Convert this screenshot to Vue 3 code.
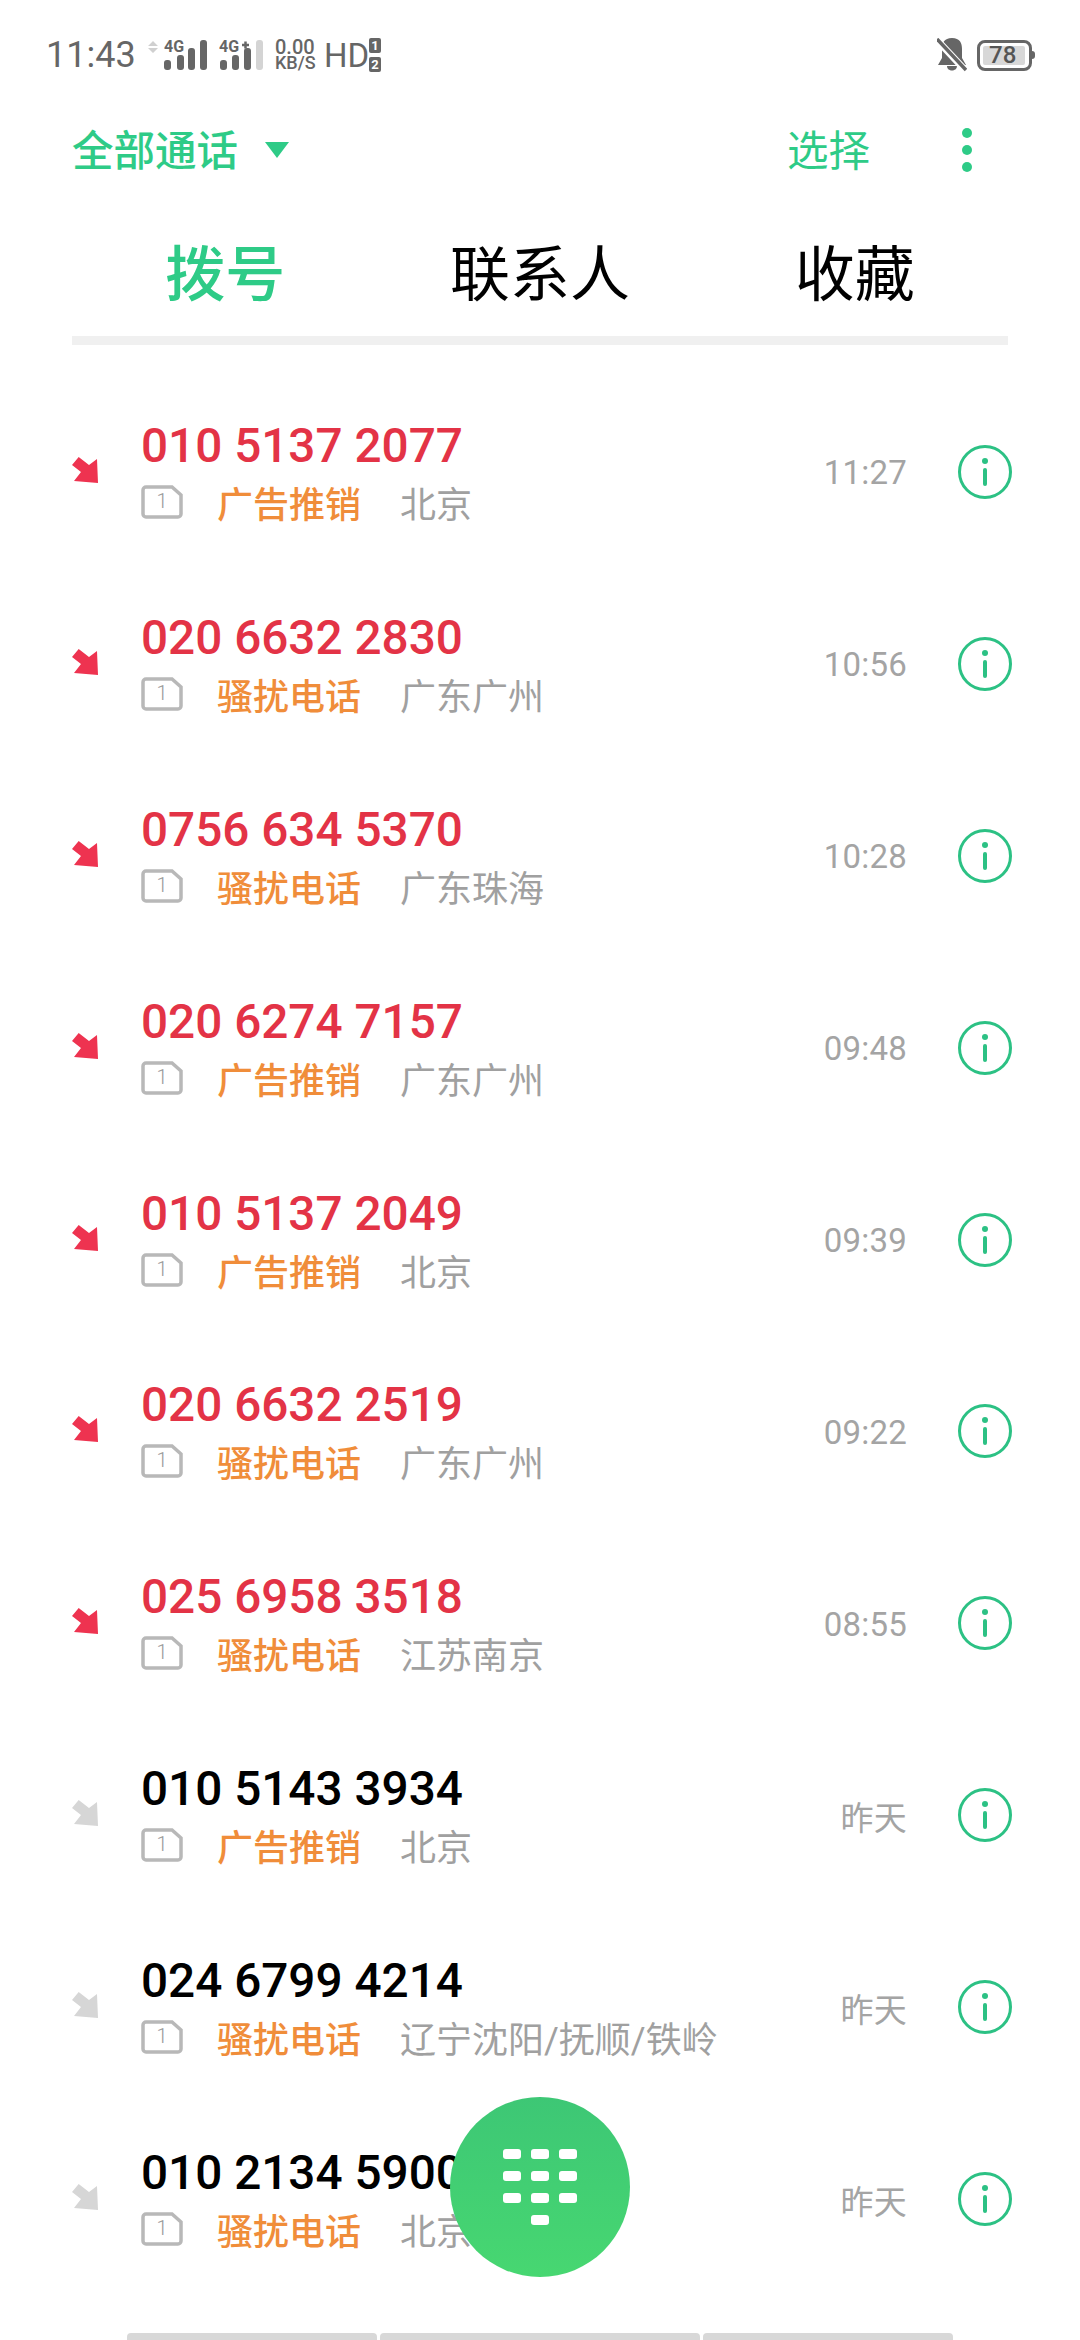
<script setup>
const calls = [
  { num: '010 5137 2077', tag: '广告推销', loc: '北京', time: '11:27', missed: true },
  { num: '020 6632 2830', tag: '骚扰电话', loc: '广东广州', time: '10:56', missed: true },
  { num: '0756 634 5370', tag: '骚扰电话', loc: '广东珠海', time: '10:28', missed: true },
  { num: '020 6274 7157', tag: '广告推销', loc: '广东广州', time: '09:48', missed: true },
  { num: '010 5137 2049', tag: '广告推销', loc: '北京', time: '09:39', missed: true },
  { num: '020 6632 2519', tag: '骚扰电话', loc: '广东广州', time: '09:22', missed: true },
  { num: '025 6958 3518', tag: '骚扰电话', loc: '江苏南京', time: '08:55', missed: true },
  { num: '010 5143 3934', tag: '广告推销', loc: '北京', time: '昨天', missed: false },
  { num: '024 6799 4214', tag: '骚扰电话', loc: '辽宁沈阳/抚顺/铁岭', time: '昨天', missed: false },
  { num: '010 2134 5900', tag: '骚扰电话', loc: '北京', time: '昨天', missed: false },
]
const keys = 10
</script>

<template>
  <div class="screen">
    <div class="status">
      <span class="clock">11:43</span>
      <svg class="sig sig1" width="60" height="40" viewBox="0 -8 60 40">
        <path d="M5 2 L10 7 H0 Z M5 14 L10 9 H0 Z" fill="#d0d0d0" />
        <text x="16" y="13" class="sig-t">4G</text>
        <rect x="16" y="21" width="7" height="10" rx="3" fill="#666" />
        <rect x="29" y="16" width="7" height="15" rx="3" fill="#666" />
        <rect x="40" y="9" width="7" height="22" rx="3" fill="#666" />
        <rect x="52" y="1" width="7" height="30" rx="3" fill="#666" />
      </svg>
      <svg class="sig sig2" width="45" height="40" viewBox="0 -8 45 40">
        <text x="0" y="13" class="sig-t">4G</text>
        <path d="M23 6 H30 M26.500 2.500 V9.500" stroke="#666" stroke-width="2.500" />
        <rect x="1" y="21" width="7" height="10" rx="3" fill="#666" />
        <rect x="13" y="16" width="7" height="15" rx="3" fill="#666" />
        <rect x="25" y="9" width="7" height="22" rx="3" fill="#666" />
        <rect x="37" y="1" width="7" height="30" rx="3" fill="#d4d4d4" />
      </svg>
      <div class="speed"><span>0.00</span><span class="unit">KB/S</span></div>
      <span class="hd">HD</span>
      <div class="sims"><span>1</span><span>2</span></div>
      <div class="status-right">
        <svg width="30" height="34" viewBox="0 0 30 34">
          <path d="M15 0 C7 0 5 5 5 11 V20 L1 27 H29 L25 20 V11 C25 5 23 0 15 0 Z M10 28 H20 C20 34 10 34 10 28 Z" fill="#666" />
          <path d="M0 2 L29 33" stroke="#fff" stroke-width="7" />
          <path d="M0 1 L29 32" stroke="#666" stroke-width="3.500" />
        </svg>
        <div class="battery">
          <div class="battery-fill">78</div>
        </div>
        <div class="nub"></div>
      </div>
    </div>

    <div class="header">
      <span class="filter">全部通话</span>
      <span class="caret"></span>
      <span class="select">选择</span>
      <div class="more"><i></i><i></i><i></i></div>
    </div>

    <div class="tabs">
      <span class="tab active">拨号</span>
      <span class="tab">联系人</span>
      <span class="tab">收藏</span>
    </div>
    <div class="divider"></div>

    <div class="list">
      <div v-for="c in calls" :key="c.num" class="row">
        <svg class="arrow" width="26" height="26" viewBox="0 0 26 26">
          <path d="M6.700 0 L17 8 L25 2 L26 26 L2 24 L9 15 L0 8 Z" :fill="c.missed ? '#ee3350' : '#d6d6d6'" />
        </svg>
        <div class="body">
          <div class="num" :class="{ missed: c.missed }">{{ c.num }}</div>
          <div class="sub">
            <svg class="sim" width="42" height="34" viewBox="0 0 42 34">
              <path d="M5 2 H31 L40 10 V29 A3 3 0 0 1 37 32 H5 A3 3 0 0 1 2 29 V5 A3 3 0 0 1 5 2 Z" fill="none" stroke="#b8b8b8" stroke-width="3.500" />
              <text x="21" y="23" text-anchor="middle" class="sim-t">1</text>
            </svg>
            <span class="tag">{{ c.tag }}</span>
            <span class="loc">{{ c.loc }}</span>
          </div>
        </div>
        <span class="time">{{ c.time }}</span>
        <svg class="info" width="56" height="56" viewBox="0 0 56 56">
          <circle cx="28" cy="28" r="25.500" fill="none" stroke="#2cc184" stroke-width="3" />
          <circle cx="28" cy="17" r="3" fill="#2cc184" />
          <rect x="26" y="24" width="4" height="18" rx="2" fill="#2cc184" />
        </svg>
      </div>
    </div>

    <div class="nav">
      <i class="n1"></i><i class="n2"></i><i class="n1"></i>
    </div>

    <div class="fab">
      <div class="pad">
        <i v-for="k in keys" :key="k" :class="{ last: k === keys }"></i>
      </div>
    </div>
  </div>
</template>

<style>
html, body { margin: 0; background: #fff; }
</style>

<style scoped>
.screen {
  position: relative;
  width: 1080px;
  height: 2340px;
  overflow: hidden;
  background: #fff;
  display: flex;
  flex-direction: column;
  font-family: Roboto, "Noto Sans CJK SC", sans-serif;
}
.status {
  height: 110px;
  display: flex;
  align-items: center;
  padding-left: 46px;
  box-sizing: border-box;
  color: #666;
}
.clock { font-size: 36px; width: 102px; }
.sig { margin-top: -8px; }
.sig1 { margin-right: 11px; }
.sig2 { margin-right: 11px; }
.sig-t { font: 700 16px Roboto, sans-serif; fill: #666; }
.speed {
  display: flex;
  flex-direction: column;
  width: 50px;
  font-size: 20px;
  line-height: 16px;
  font-weight: 500;
}
.unit { font-size: 18px; }
.hd { font-size: 33px; width: 45px; margin-left: -1px; }
.sims {
  display: flex;
  flex-direction: column;
  gap: 4px;
}
.sims span {
  width: 12px;
  height: 15px;
  background: #666;
  border-radius: 2px;
  color: #fff;
  font-size: 13px;
  font-weight: 700;
  line-height: 15px;
  text-align: center;
}
.status-right {
  margin-left: auto;
  margin-right: 45px;
  display: flex;
  align-items: center;
}
.battery {
  margin-left: 10px;
  width: 55px;
  height: 31px;
  border: 3px solid #666;
  border-radius: 8px;
  box-sizing: border-box;
  padding: 3px;
}
.battery-fill {
  width: 36px;
  height: 19px;
  background: #d8d8d8;
  border-radius: 2px;
  font-size: 24px;
  font-weight: 500;
  line-height: 19px;
  padding-left: 6px;
  color: #555;
}
.nub { width: 3px; height: 8px; background: #666; border-radius: 0 3px 3px 0; }
.header {
  height: 80px;
  display: flex;
  align-items: center;
  padding-left: 72px;
  padding-bottom: 5px;
  box-sizing: border-box;
  color: #2ecb87;
  font-size: 41.5px;
}
.filter { font-weight: 500; }
.caret {
  margin-left: 27px;
  margin-top: 5px;
  width: 0;
  height: 0;
  border-left: 12px solid transparent;
  border-right: 12px solid transparent;
  border-top: 16px solid #2ecb87;
}
.select { margin-left: auto; }
.more {
  margin: 5px 108px 0 92px;
  display: flex;
  flex-direction: column;
  gap: 7px;
}
.more i { width: 10px; height: 10px; border-radius: 50%; background: #2ecb87; }
.tabs {
  height: 146px;
  padding: 13px 68px 0;
  box-sizing: border-box;
  display: grid;
  grid-template-columns: repeat(3, 1fr);
  align-items: center;
  text-align: center;
  font-size: 60px;
  color: #000;
}
.tab.active { color: #2ecb87; font-weight: 500; }
.divider { height: 9px; margin: 0 72px; background: #f0f0f0; }
.list { margin-top: 31px; flex: 1; }
.row {
  height: 191.9px;
  display: flex;
  align-items: center;
  padding-left: 72px;
}
.arrow { width: 26px; margin: 0 43px 4px 0; flex: none; }
.body { display: flex; flex-direction: column; padding-top: 5px; }
.num {
  font-size: 47.7px;
  font-weight: 500;
  line-height: 57px;
  color: #000;
}
.num.missed { color: #e33346; }
.sub {
  display: flex;
  align-items: center;
  height: 58px;
  margin-top: -2px;
  font-size: 36px;
}
.sim { flex: none; }
.sim-t { font: 300 20px Roboto, sans-serif; fill: #999; }
.tag { margin-left: 34px; color: #f08d3a; font-weight: 500; width: 183px; }
.loc { color: #a0a0a0; }
.time {
  margin-left: auto;
  margin-top: 2px;
  font-size: 33px;
  color: #a4a4a4;
  letter-spacing: 0.2px;
}
.info { margin: 0 67px 0 50px; flex: none; }
.nav {
  display: flex;
  gap: 3px;
  justify-content: center;
  height: 7px;
}
.nav i { background: #d8d8d8; border-radius: 4px 4px 0 0; }
.n1 { width: 250px; }
.n2 { width: 320px; }
.fab {
  position: absolute;
  left: 450px;
  top: 2097px;
  width: 180px;
  height: 180px;
  border-radius: 50%;
  background: linear-gradient(180deg, #3dc775, #47d771);
  display: flex;
  align-items: center;
  justify-content: center;
}
.pad {
  display: grid;
  grid-template-columns: repeat(3, 18px);
  grid-auto-rows: 10px;
  column-gap: 10px;
  row-gap: 12px;
}
.pad i { background: #fff; border-radius: 3px; }
.pad i.last { grid-column: 2; }
</style>
